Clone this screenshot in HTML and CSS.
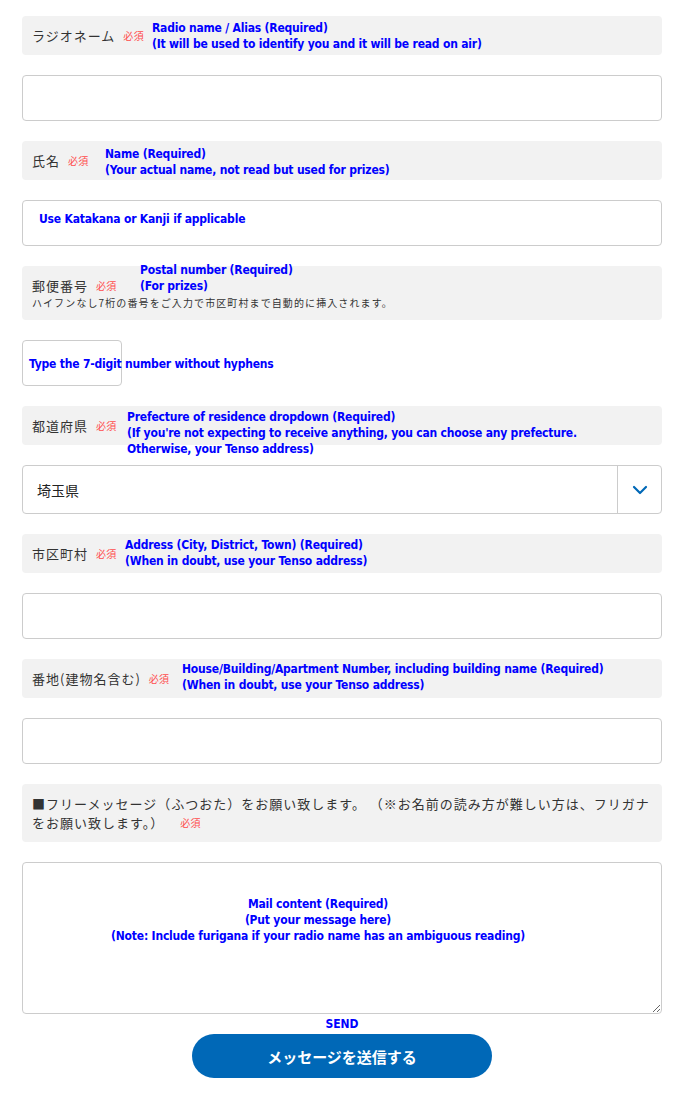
FILE: index.html
```html
<!DOCTYPE html>
<html lang="ja">
<head>
<meta charset="utf-8">
<title>Form</title>
<link rel="stylesheet" href="styles.css">
</head>
<body>
<form class="form">
  <div class="field">
    <div class="label">
      <span class="lbl-text">ラジオネーム</span><span class="req">必須</span>
      <p class="note note-radio">Radio name / Alias (Required)<br>(It will be used to identify you and it will be read on air)</p>
    </div>
    <div class="input"></div>
  </div>

  <div class="field">
    <div class="label">
      <span class="lbl-text">氏名</span><span class="req">必須</span>
      <p class="note note-name">Name (Required)<br>(Your actual name, not read but used for prizes)</p>
    </div>
    <div class="input"><span class="note note-inname">Use Katakana or Kanji if applicable</span></div>
  </div>

  <div class="field">
    <div class="label label-postal">
      <div class="row"><span class="lbl-text">郵便番号</span><span class="req">必須</span></div>
      <p class="hint">ハイフンなし7桁の番号をご入力で市区町村まで自動的に挿入されます。</p>
      <p class="note note-postal">Postal number (Required)<br>(For prizes)</p>
    </div>
    <div class="input input-postal"><span class="note note-inpostal">Type the 7-digit number without hyphens</span></div>
  </div>

  <div class="field">
    <div class="label">
      <span class="lbl-text">都道府県</span><span class="req">必須</span>
      <p class="note note-pref">Prefecture of residence dropdown (Required)<br>(If you're not expecting to receive anything, you can choose any prefecture.<br>Otherwise, your Tenso address)</p>
    </div>
    <div class="select">
      <span class="select-value">埼玉県</span>
      <span class="select-arrow"><svg width="16" height="10" viewBox="0 0 16 10"><path d="M2 2 L8 8 L14 2" fill="none" stroke="#0068b7" stroke-width="2.2" stroke-linecap="round" stroke-linejoin="round"/></svg></span>
    </div>
  </div>

  <div class="field">
    <div class="label">
      <span class="lbl-text">市区町村</span><span class="req">必須</span>
      <p class="note note-city">Address (City, District, Town) (Required)<br>(When in doubt, use your Tenso address)</p>
    </div>
    <div class="input"></div>
  </div>

  <div class="field">
    <div class="label">
      <span class="lbl-text">番地(建物名含む)</span><span class="req">必須</span>
      <p class="note note-house">House/Building/Apartment Number, including building name (Required)<br>(When in doubt, use your Tenso address)</p>
    </div>
    <div class="input"></div>
  </div>

  <div class="field">
    <div class="label label-msg">
      <p class="msg-text">■フリーメッセージ（ふつおた）をお願い致します。 （※お名前の読み方が難しい方は、フリガナをお願い致します。）<span class="req req-msg">必須</span></p>
    </div>
    <div class="textarea-wrap">
      <textarea class="textarea"></textarea>
      <p class="note note-mail">Mail content (Required)<br>(Put your message here)<br>(Note: Include furigana if your radio name has an ambiguous reading)</p>
    </div>
  </div>

  <div class="submit">
    <span class="note-send">SEND</span>
    <button type="button" class="btn">メッセージを送信する</button>
  </div>
</form>
</body>
</html>
```

FILE: styles.css
```css
* { box-sizing: border-box; }
html, body { margin: 0; padding: 0; background: #fff; }
body {
  font-family: "Noto Sans CJK JP", "Noto Sans", sans-serif;
  color: #333;
}
.form {
  width: 640px;
  margin-left: 22px;
  padding-top: 16px;
  display: flex;
  flex-direction: column;
  gap: 20px;
}
.field { display: flex; flex-direction: column; gap: 20px; }
.label {
  position: relative;
  background: #f2f2f2;
  border-radius: 4px;
  padding: 10px 10px;
  display: flex;
  align-items: center;
  font-size: 13px;
  line-height: 19px;
  letter-spacing: 1px;
}
.label-postal { flex-direction: column; align-items: flex-start; }
.row { display: flex; align-items: center; }
.lbl-text { font-size: 13px; color: #333; }
.req {
  font-size: 10px;
  color: #ff4d4d;
  margin-left: 8px;
  letter-spacing: 0.3px;
}
.hint {
  margin: 0;
  font-size: 10px;
  line-height: 15px;
  letter-spacing: 1.1px;
  color: #333;
}
.note {
  position: absolute;
  margin: 0;
  font-family: "Liberation Sans Narrow", "DejaVu Sans Condensed", sans-serif;
  font-weight: bold;
  font-size: 12px;
  line-height: 16px;
  color: #0000ff;
  letter-spacing: -0.2px;
  white-space: nowrap;
}
.note-radio { left: 130px; top: 4px; }
.note-name { left: 83px; top: 5px; }
.note-postal { left: 118px; top: -4px; }
.note-pref { left: 105px; top: 3px; }
.note-city { left: 103px; top: 3px; }
.note-house { left: 160px; top: 2px; }
.input {
  position: relative;
  height: 46px;
  border: 1px solid #ccc;
  border-radius: 4px;
  background: #fff;
}
.input-postal { width: 100px; }
.note-inname { left: 16px; top: 10px; }
.note-inpostal { left: 6px; top: 15px; }
.select {
  height: 49px;
  border: 1px solid #ccc;
  border-radius: 4px;
  display: flex;
  align-items: stretch;
}
.select-value {
  flex: 1;
  display: flex;
  align-items: center;
  padding-left: 14px;
  font-size: 14px;
  color: #222;
}
.select-arrow {
  width: 44px;
  border-left: 1px solid #ccc;
  display: flex;
  align-items: center;
  justify-content: center;
}
.label-msg { padding: 10px; display: block; }
.msg-text { margin: 0; font-size: 13px; line-height: 19px; letter-spacing: 1px; }
.req-msg { display: inline-block; line-height: 19px; vertical-align: top; margin-left: 16px; }
.textarea-wrap { position: relative; height: 152px; }
.textarea {
  display: block;
  width: 100%;
  height: 152px;
  border: 1px solid #ccc;
  border-radius: 4px;
  resize: vertical;
  background: #fff;
  margin: 0;
}
.note-mail { left: 88px; top: 34px; text-align: center; width: 416px; }
.submit {
  display: flex;
  flex-direction: column;
  align-items: center;
  margin-top: -20px;
}
.note-send {
  font-family: "Liberation Sans Narrow", "DejaVu Sans Condensed", sans-serif;
  font-weight: bold;
  font-size: 12px;
  line-height: 18px;
  color: #0000ff;
  margin-top: 1px;
}
.btn {
  width: 300px;
  height: 44px;
  border: none;
  border-radius: 22px;
  background: #0068b7;
  color: #fff;
  font-family: "Noto Sans CJK JP", sans-serif;
  font-weight: bold;
  font-size: 15px;
  margin-top: 1px;
}
```
